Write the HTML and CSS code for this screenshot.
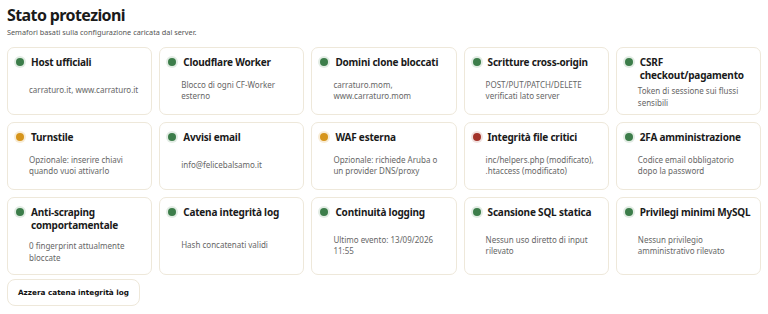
FILE: index.html
```html
<!DOCTYPE html>
<html lang="it">
<head>
  <meta charset="UTF-8" />
  <meta name="viewport" content="width=device-width, initial-scale=1.0" />
  <title>Stato protezioni</title>
  <link rel="stylesheet" href="styles.css">
</head>
<body>
  <main class="page">
    <h1>Stato protezioni</h1>
    <p class="lead">Semafori basati sulla configurazione caricata dal server.</p>

    <div class="grid">
      <div class="card">
        <div class="card-title"><span class="dot ok"></span>Host ufficiali</div>
        <div class="card-desc">carraturo.it, www.carraturo.it</div>
      </div>
      <div class="card">
        <div class="card-title"><span class="dot ok"></span>Cloudflare Worker</div>
        <div class="card-desc">Blocco di ogni CF-Worker esterno</div>
      </div>
      <div class="card">
        <div class="card-title"><span class="dot ok"></span>Domini clone bloccati</div>
        <div class="card-desc">carraturo.mom, www.carraturo.mom</div>
      </div>
      <div class="card">
        <div class="card-title"><span class="dot ok"></span>Scritture cross-origin</div>
        <div class="card-desc">POST/PUT/PATCH/DELETE verificati lato server</div>
      </div>
      <div class="card">
        <div class="card-title"><span class="dot ok"></span>CSRF checkout/pagamento</div>
        <div class="card-desc">Token di sessione sui flussi sensibili</div>
      </div>

      <div class="card">
        <div class="card-title"><span class="dot warn"></span>Turnstile</div>
        <div class="card-desc">Opzionale: inserire chiavi quando vuoi attivarlo</div>
      </div>
      <div class="card">
        <div class="card-title"><span class="dot ok"></span>Avvisi email</div>
        <div class="card-desc">info@felicebalsamo.it</div>
      </div>
      <div class="card">
        <div class="card-title"><span class="dot warn"></span>WAF esterna</div>
        <div class="card-desc">Opzionale: richiede Aruba o un provider DNS/proxy</div>
      </div>
      <div class="card">
        <div class="card-title"><span class="dot bad"></span>Integrità file critici</div>
        <div class="card-desc">inc/helpers.php (modificato), .htaccess (modificato)</div>
      </div>
      <div class="card">
        <div class="card-title"><span class="dot ok"></span>2FA amministrazione</div>
        <div class="card-desc">Codice email obbligatorio dopo la password</div>
      </div>

      <div class="card">
        <div class="card-title"><span class="dot ok"></span>Anti-scraping comportamentale</div>
        <div class="card-desc">0 fingerprint attualmente bloccate</div>
      </div>
      <div class="card">
        <div class="card-title"><span class="dot ok"></span>Catena integrità log</div>
        <div class="card-desc">Hash concatenati validi</div>
      </div>
      <div class="card">
        <div class="card-title"><span class="dot ok"></span>Continuità logging</div>
        <div class="card-desc">Ultimo evento: 13/09/2026 11:55</div>
      </div>
      <div class="card">
        <div class="card-title"><span class="dot ok"></span>Scansione SQL statica</div>
        <div class="card-desc">Nessun uso diretto di input rilevato</div>
      </div>
      <div class="card">
        <div class="card-title"><span class="dot ok"></span>Privilegi minimi MySQL</div>
        <div class="card-desc">Nessun privilegio amministrativo rilevato</div>
      </div>
    </div>

    <button class="reset-btn" type="button">Azzera catena integrità log</button>
  </main>
</body>
</html>
```

FILE: styles.css
```css
* {
  margin: 0;
  padding: 0;
  box-sizing: border-box;
}

body {
  font-family: 'Noto Sans', 'Open Sans', sans-serif;
  color: #1d1d1d;
  background: #fff;
}

.page {
  padding: 4px 7px 10px;
  display: flex;
  flex-direction: column;
  align-items: flex-start;
}

h1 {
  font-size: 16px;
  font-weight: 700;
  line-height: 22px;
  letter-spacing: -0.6px;
  color: #1a1a1a;
}

.lead {
  font-size: 7.3px;
  line-height: 12px;
  color: #555;
}

.grid {
  width: 100%;
  margin-top: 9px;
  display: grid;
  grid-template-columns: repeat(5, 1fr);
  grid-template-rows: 68px 68px 78px;
  gap: 7px;
}

.card {
  border: 1px solid #eee8da;
  border-radius: 7px;
  background: #fff;
  padding: 8px 8px 6px;
  display: flex;
  flex-direction: column;
}

.card-title {
  display: flex;
  align-items: flex-start;
  font-size: 10px;
  font-weight: 700;
  line-height: 13px;
  letter-spacing: -0.2px;
  color: #1a1a1a;
}

.dot {
  flex-shrink: 0;
  width: 8px;
  height: 8px;
  border-radius: 50%;
  margin: 2px 7px 0 0;
}

.dot.ok {
  background: #3c7d4a;
  box-shadow: 0 0 0 2px rgba(60, 125, 74, 0.15);
}

.dot.warn {
  background: #d6951c;
  box-shadow: 0 0 0 2px rgba(214, 149, 28, 0.18);
}

.dot.bad {
  background: #a3332a;
  box-shadow: 0 0 0 2px rgba(163, 51, 42, 0.15);
}

.card-desc {
  flex: 1;
  display: flex;
  align-items: center;
  margin-top: 3px;
  padding-left: 13px;
  font-size: 8px;
  line-height: 11.5px;
  color: #666;
}

.reset-btn {
  margin-top: 4px;
  padding: 8px 10px;
  border: 1px solid #eee8da;
  border-radius: 8px;
  background: #fff;
  font-family: 'DejaVu Sans', sans-serif;
  font-size: 7.25px;
  font-weight: 700;
  color: #111;
  cursor: pointer;
}
```
